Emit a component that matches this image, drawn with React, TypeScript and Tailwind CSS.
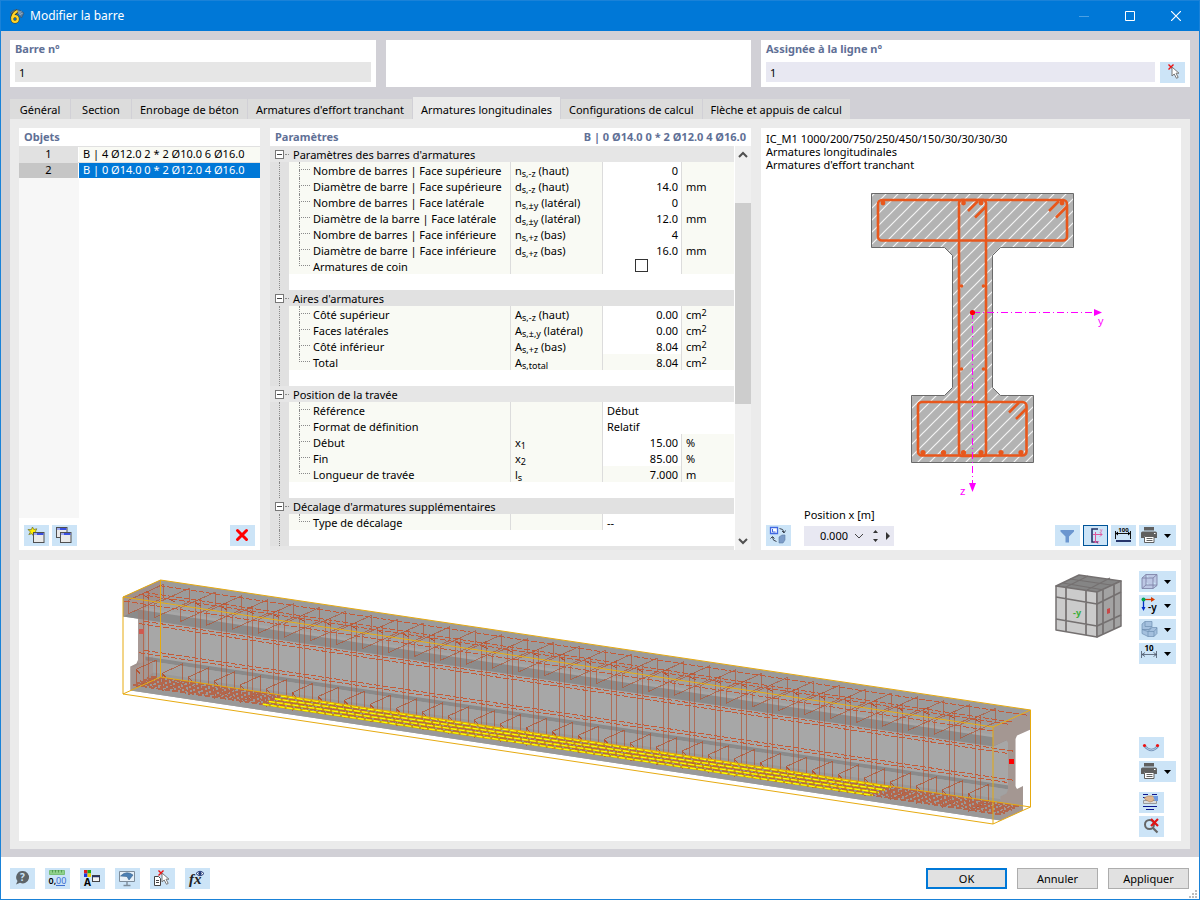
import { useState } from 'react'
import type { ReactNode } from 'react'

interface ParamRow {
  label: string
  sym?: string
  sub?: string
  side?: string
  value?: string
  unit?: string
  sup?: string
  kind?: 'text' | 'check' | 'readonly'
}

interface ParamGroup {
  title: string
  rows: ParamRow[]
}

const tabs = [
  'Général',
  'Section',
  'Enrobage de béton',
  "Armatures d'effort tranchant",
  'Armatures longitudinales',
  'Configurations de calcul',
  'Flèche et appuis de calcul',
]

const objects = ['B | 4 Ø12.0 2 * 2 Ø10.0 6 Ø16.0', 'B | 0 Ø14.0 0 * 2 Ø12.0 4 Ø16.0']

const groups: ParamGroup[] = [
  {
    title: "Paramètres des barres d'armatures",
    rows: [
      { label: 'Nombre de barres | Face supérieure', sym: 'n', sub: 's,-z', side: '(haut)', value: '0' },
      { label: 'Diamètre de barre | Face supérieure', sym: 'd', sub: 's,-z', side: '(haut)', value: '14.0', unit: 'mm' },
      { label: 'Nombre de barres | Face latérale', sym: 'n', sub: 's,±y', side: '(latéral)', value: '0' },
      { label: 'Diamètre de la barre | Face latérale', sym: 'd', sub: 's,±y', side: '(latéral)', value: '12.0', unit: 'mm' },
      { label: 'Nombre de barres | Face inférieure', sym: 'n', sub: 's,+z', side: '(bas)', value: '4' },
      { label: 'Diamètre de barre | Face inférieure', sym: 'd', sub: 's,+z', side: '(bas)', value: '16.0', unit: 'mm' },
      { label: 'Armatures de coin', kind: 'check' },
    ],
  },
  {
    title: "Aires d'armatures",
    rows: [
      { label: 'Côté supérieur', sym: 'A', sub: 's,-z', side: '(haut)', value: '0.00', unit: 'cm', sup: '2' },
      { label: 'Faces latérales', sym: 'A', sub: 's,±,y', side: '(latéral)', value: '0.00', unit: 'cm', sup: '2' },
      { label: 'Côté inférieur', sym: 'A', sub: 's,+z', side: '(bas)', value: '8.04', unit: 'cm', sup: '2' },
      { label: 'Total', sym: 'A', sub: 's,total', value: '8.04', unit: 'cm', sup: '2', kind: 'readonly' },
    ],
  },
  {
    title: 'Position de la travée',
    rows: [
      { label: 'Référence', value: 'Début', kind: 'text' },
      { label: 'Format de définition', value: 'Relatif', kind: 'text' },
      { label: 'Début', sym: 'x', sub: '1', value: '15.00', unit: '%' },
      { label: 'Fin', sym: 'x', sub: '2', value: '85.00', unit: '%' },
      { label: 'Longueur de travée', sym: 'l', sub: 's', value: '7.000', unit: 'm', kind: 'readonly' },
    ],
  },
  {
    title: "Décalage d'armatures supplémentaires",
    rows: [{ label: 'Type de décalage', value: '--', kind: 'text' }],
  },
]

function IconButton({ label, menu, active, children }: { label: string; menu?: boolean; active?: boolean; children: ReactNode }) {
  return (
    <button
      type="button"
      aria-label={label}
      className={`flex h-[21px] shrink-0 items-center bg-[#cce4f7] hover:bg-[#b3d7f2] ${menu ? 'w-[37px]' : 'w-[25px]'} ${active ? 'outline outline-1 -outline-offset-1 outline-[#005499]' : ''}`}
    >
      <svg viewBox="0 0 25 21" className="h-[21px] w-[25px] shrink-0">{children}</svg>
      {menu && (
        <svg viewBox="0 0 7 4" className="h-1 w-[7px]"><path d="M0 0h7L3.500 4z" /></svg>
      )}
    </button>
  )
}

function Pointer({ x, y }: { x: number; y: number }) {
  return (
    <path
      transform={`translate(${x} ${y})`}
      d="M0 0v9l2.200-2 2.300 4.300 1.700-.9-2.200-4.200h3z"
      fill="#fff"
      stroke="#777"
      strokeWidth="1"
    />
  )
}

function MiniWindow({ x, y }: { x: number; y: number }) {
  return (
    <g transform={`translate(${x} ${y})`}>
      <rect x=".5" y=".5" width="10.500" height="10" fill="#e9e9e9" stroke="#505050" />
      <path d="M1 2h9.500" stroke="#3a50e0" strokeWidth="2" />
      <path d="M1 2h3" stroke="#fff" strokeWidth="1" />
    </g>
  )
}

function PrinterIcon() {
  return (
    <g>
      <path d="M5 2h10v3.500H5z" fill="#606060" />
      <path d="M3.500 6.500h13q1.500 0 1.500 1.500v5h-3v-2H5v2H2V8q0-1.500 1.500-1.500z" fill="#606060" />
      <path d="M5.500 11.500h9.500v6H5.500z" fill="#fff" stroke="#606060" />
      <path d="M7.500 13.500h6M7.500 15.500h6" stroke="#606060" />
      <path d="M15 8.500h1.500" stroke="#fff" />
    </g>
  )
}

function PickIcon() {
  return (
    <g>
      <path d="M8.500 2.500l5 5M13.500 2.500l-5 5" stroke="#e11" strokeWidth="1.400" />
      <Pointer x={12} y={5} />
    </g>
  )
}

function TitleBar() {
  return (
    <header className="flex h-[30px] items-center bg-[#0078d7] pl-2 text-white">
      <svg viewBox="0 0 16 16" className="h-4 w-4">
        <path d="M1 5Q7-2 15 5L12.500 10 9 6 4 6z" fill="#5c7c9c" stroke="#2f5070" strokeWidth=".6" />
        <path d="M4 4l4-2 5 4M6 2l6 5M9 5l4-2M10 7l4-2" stroke="#a9bfd2" strokeWidth=".5" fill="none" />
        <path d="M8.500 3Q4 5 3 10" stroke="#3d3d20" strokeWidth="3.600" fill="none" />
        <circle cx="6" cy="11" r="2.800" stroke="#3d3d20" strokeWidth="3.400" fill="none" />
        <path d="M8.500 3Q4 5 3.200 10" stroke="#ffd42a" strokeWidth="2.200" fill="none" />
        <circle cx="6" cy="11" r="2.800" stroke="#ffd42a" strokeWidth="2.200" fill="none" />
      </svg>
      <h1 className="ml-[5px] flex-1 text-[12px] leading-4">Modifier la barre</h1>
      <button type="button" aria-label="Réduire" className="flex h-full w-[46px] items-center justify-center" disabled>
        <svg viewBox="0 0 10 10" className="h-[10px] w-[10px]"><path d="M0 5.500h10" stroke="#4ba0e3" /></svg>
      </button>
      <button type="button" aria-label="Agrandir" className="flex h-full w-[46px] items-center justify-center">
        <svg viewBox="0 0 10 10" className="h-[10px] w-[10px]"><path d="M.5.5h9v9h-9z" fill="none" stroke="#fff" /></svg>
      </button>
      <button type="button" aria-label="Fermer" className="flex h-full w-[46px] items-center justify-center">
        <svg viewBox="0 0 10 10" className="h-[10px] w-[10px]"><path d="M0 0l10 10M10 0L0 10" stroke="#fff" strokeWidth="1.200" /></svg>
      </button>
    </header>
  )
}

function ObjectList() {
  const [selected, setSelected] = useState(1)
  return (
    <section className="flex flex-col bg-white">
      <h2 className="h-[18px] px-[5px] font-bold leading-[18px] text-[#5f7096]">Objets</h2>
      <div className="flex flex-1 flex-col">
        {objects.map((o, i) => (
          <button key={o} type="button" onClick={() => setSelected(i)} className="flex h-4 w-full border-t border-[#e1e1e1] text-left leading-[14px]">
            <span className={`h-[15px] w-[60px] shrink-0 border-r border-white text-center ${i === selected ? 'bg-[#c6c6c6]' : 'bg-[#e1e1e1]'}`}>{i + 1}</span>
            <span className={`h-[15px] flex-1 truncate pl-1 ${i === selected ? 'bg-[#0078d7] text-white' : 'bg-[#f9faf4]'}`}>{o}</span>
          </button>
        ))}
        <div className="w-[60px] flex-1 bg-[#f7f7f7]" />
      </div>
      <div className="mt-[7px] mb-1 flex gap-[3px] px-[5px]">
        <IconButton label="Nouveau">
          <path d="M8.500 2l1.300 2.500 3-.7-1.300 2.500 1.700 2-2.700.2-1 2.500-1.500-2.300-3.200.8L6.500 7 4 4.500l3.300.2z" fill="#ffee00" stroke="#77772a" strokeWidth=".8" />
          <MiniWindow x={9} y={7} />
        </IconButton>
        <IconButton label="Copier">
          <MiniWindow x={4} y={2} />
          <MiniWindow x={8} y={7} />
        </IconButton>
        <span className="flex-1" />
        <IconButton label="Supprimer">
          <path d="M7.500 5.500l9 9M16.500 5.500l-9 9" stroke="#f00" strokeWidth="3" strokeLinecap="round" />
        </IconButton>
      </div>
    </section>
  )
}

function ParamLine({ row, last }: { row: ParamRow; last: boolean }) {
  const wide = row.kind === 'text'
  const tint = row.kind === 'readonly' ? 'bg-[#f9faf4]' : 'bg-white'
  return (
    <tr className="h-4">
      <td className="bg-[#e1e1e1] p-0"><span className="ml-[9px] block h-4 border-l border-dotted border-[#8a8a8a]" /></td>
      <td className="bg-[#f9faf4] p-0">
        <span className="flex h-4">
          <span className="ml-[10px] w-[11px]">
            <span className="block h-2 border-b border-l border-dotted border-[#8a8a8a]" />
            {!last && <span className="block h-2 border-l border-dotted border-[#8a8a8a]" />}
          </span>
          <span className="ml-[3px] whitespace-nowrap">{row.label}</span>
        </span>
      </td>
      <td className="border-l border-[#dcdcdc] bg-[#f9faf4] p-0">
        <span className="block h-4 pl-1 whitespace-nowrap">
          {row.sym}
          <span className="relative top-[2px] text-[9px] leading-none">{row.sub}</span> {row.side}
        </span>
      </td>
      <td colSpan={wide ? 2 : 1} className={`border-l border-[#dcdcdc] p-0 ${tint}`}>
        {row.kind === 'check' ? (
          <input type="checkbox" aria-label={row.label} className="mx-auto mb-px block h-[13px] w-[13px] appearance-none border border-[#333] bg-white checked:bg-[#0078d7]" />
        ) : (
          <span className={`block h-4 ${wide ? 'pl-1 text-left' : 'pr-[3px] text-right'}`}>{row.value}</span>
        )}
      </td>
      {!wide && (
        <td className="border-l border-[#dcdcdc] bg-[#f9faf4] p-0">
          <span className="block h-4 pl-1">
            {row.unit}
            {row.sup && <span className="relative -top-[3px] text-[9px] leading-none">{row.sup}</span>}
          </span>
        </td>
      )}
    </tr>
  )
}

function GroupRows({ group, odd }: { group: ParamGroup; odd: boolean }) {
  const [open, setOpen] = useState(true)
  const bg = odd ? 'bg-[#e1e1e1]' : 'bg-[#e6e6e6]'
  return (
    <tbody>
      <tr className={`h-4 ${bg}`}>
        <td className="p-0">
          <span className="flex h-4 items-center pl-[5px]">
            <button type="button" aria-label={group.title} onClick={() => setOpen(!open)} className="flex h-[9px] w-[9px] items-center justify-center border border-[#777] bg-white">
              <span className="h-px w-[5px] bg-[#444]" />
            </button>
            <span className="ml-px h-px w-1 border-t border-dotted border-[#8a8a8a]" />
          </span>
        </td>
        <th colSpan={4} className="p-0 text-left font-normal">
          <span className="block h-4 pl-1">{group.title}</span>
        </th>
      </tr>
      {open && group.rows.map((r, i) => <ParamLine key={r.label} row={r} last={i === group.rows.length - 1} />)}
      <tr className="h-4">
        <td className="bg-[#e1e1e1] p-0"><span className="ml-[9px] block h-4 border-l border-dotted border-[#8a8a8a]" /></td>
        <td colSpan={4} className="bg-white p-0" />
      </tr>
    </tbody>
  )
}

function Parameters() {
  return (
    <section className="bg-white">
      <h2 className="flex h-[18px] justify-between px-[5px] font-bold leading-[18px] text-[#5f7096]">
        <span>Paramètres</span>
        <span>{objects[1]}</span>
      </h2>
      <div className="flex h-[404px]">
        <div className="flex-1 overflow-hidden">
          <table className="w-full table-fixed border-separate border-spacing-0 leading-[18px]">
            <colgroup>
              <col className="w-[19px]" />
              <col />
              <col className="w-[92px]" />
              <col className="w-[79px]" />
              <col className="w-[53px]" />
            </colgroup>
            {groups.map((g, i) => <GroupRows key={g.title} group={g} odd={i % 2 === 1} />)}
            <tbody><tr className="h-4 bg-[#e6e6e6]"><td colSpan={5} /></tr></tbody>
          </table>
        </div>
        <div className="ml-px flex w-4 flex-col items-center bg-[#f0f0f0]">
          <svg viewBox="0 0 16 17" className="h-[17px] w-4"><path d="M4 11l4-4 4 4" fill="none" stroke="#505050" strokeWidth="2" /></svg>
          <div className="mt-10 h-[201px] w-full bg-[#cdcdcd]" />
          <span className="flex-1" />
          <svg viewBox="0 0 16 17" className="h-[17px] w-4"><path d="M4 6l4 4 4-4" fill="none" stroke="#505050" strokeWidth="2" /></svg>
        </div>
      </div>
    </section>
  )
}

function CrossSection() {
  const outline = 'M871.500 193.500h202v54h-73l-8 8v132l8 8h33v67H911.500v-67h33l8-8v-132l-8-8h-73z'
  return (
    <svg viewBox="761 171 420 332" className="block h-[332px] w-full">
      <defs>
        <pattern id="hatch" width="12" height="12" patternUnits="userSpaceOnUse">
          <path d="M-1 13L13-1M-1 1L1-1M11 13l2-2" stroke="#f4f4f4" strokeWidth="1.200" />
        </pattern>
      </defs>
      <path d={outline} fill="#b3b3b3" />
      <path d={outline} fill="url(#hatch)" stroke="#6a6a6a" />
      <g fill="none" stroke="#e8571c" strokeWidth="2.600">
        <rect x="878" y="200" width="189" height="40.500" rx="4" />
        <rect x="959" y="200" width="27" height="256" rx="3" />
        <rect x="918" y="402" width="108.500" height="53.500" rx="4" />
        <path d="M968 211l10-10M975 217.500l11-11M1049 211l10-10M1056 217.500l11-11M1009 412.500l10-10M1016 419l10-10" />
      </g>
      <g fill="#e8571c">
        {[883, 963.500, 981, 1062].map(x => <circle key={x} cx={x} cy="203" r="2.400" />)}
        {[923, 943.500, 963.500, 981, 1001, 1021].map(x => <circle key={x} cx={x} cy="452.500" r="2.600" />)}
        {[286, 369].map(y => [961.500, 983.500].map(x => <circle key={`${x}-${y}`} cx={x} cy={y} r="1.800" />))}
      </g>
      <g stroke="#f0f" strokeDasharray="7 3 1 3">
        <path d="M973 312.500h122M972.500 312v171" />
      </g>
      <path d="M1094 309v7l8-3.500zM969 483h7l-3.500 9z" fill="#f0f" />
      <circle cx="972.500" cy="312.500" r="2.600" fill="#f00" />
      <text x="1098" y="325" fill="#f0f" fontSize="11" fontFamily="Liberation Sans, sans-serif">y</text>
      <text x="960" y="495" fill="#f0f" fontSize="11" fontFamily="Liberation Sans, sans-serif">z</text>
    </svg>
  )
}

function SectionView() {
  return (
    <section className="flex flex-col bg-white">
      <div className="px-[5px] pt-1 leading-[13px]">
        <p>IC_M1 1000/200/750/250/450/150/30/30/30/30</p>
        <p>Armatures longitudinales</p>
        <p>Armatures d'effort tranchant</p>
      </div>
      <CrossSection />
      <div className="mt-auto mb-1 flex items-end px-[5px]">
        <IconButton label="Changer de vue">
          <path d="M4.500 2.500h7v6h-7z" fill="#fff" stroke="#4169e1" strokeWidth="1.300" />
          <path d="M6.500 4v3h3" stroke="#4169e1" fill="none" />
          <path d="M13.500 3.500q4 0 4.500 4M16 6l2 2 1.500-2.500M6.500 12q0 4 4 4.500M4.500 13.500l2-2 2 2" stroke="#3c4654" fill="none" />
          <path d="M13 12l3-2h3v5l-2 3h-4z" fill="#7c9cc8" stroke="#5f7fa8" strokeWidth=".6" />
        </IconButton>
        <label className="ml-[13px] block">
          <span className="block h-5 leading-[18px]">Position x [m]</span>
          <span className="flex h-5 w-[90px] items-center bg-[#e8e8f2]">
            <input defaultValue="0.000" className="w-11 bg-transparent text-right outline-none" />
            <svg viewBox="0 0 46 20" className="h-5 w-[46px]">
              <path d="M7 8l4 4 4-4" fill="none" stroke="#444" />
              <path d="M25 7h5l-2.500-3zM25 13h5l-2.500 3zM38 6v8l4-4z" fill="#333" />
            </svg>
          </span>
        </label>
        <div className="ml-auto flex gap-[3px]">
          <IconButton label="Filtrer">
            <path d="M5.500 5h13.500v1.500l-5 5v6h-3.500v-6l-5-5z" fill="#6b96cf" />
          </IconButton>
          <IconButton label="Axes" active>
            <path d="M15 4H9v13h6" fill="none" stroke="#223366" strokeWidth="1.600" />
            <path d="M10 9.500h9M12.500 7v11M17 7.500l2 2-2 2M10.500 16l2 2 2-2" stroke="#e0559b" fill="none" />
            <text x="17" y="7" fontSize="5" fill="#e0559b">y</text>
            <text x="14" y="19" fontSize="5" fill="#e0559b">z</text>
          </IconButton>
          <IconButton label="Dimensions">
            <text x="12.500" y="7" fontSize="6" fontWeight="700" textAnchor="middle">100</text>
            <path d="M4.500 6v8M19.500 6v8M5 8.500h14" stroke="#111" />
            <path d="M7 6.500v4L4.500 8.500zM17 6.500v4l2.500-2z" />
            <path d="M5 16h15" stroke="#26356b" strokeWidth="2" />
          </IconButton>
          <IconButton label="Imprimer" menu><PrinterIcon /></IconButton>
        </div>
      </div>
    </section>
  )
}

// axonometric projection: t along the beam in px, u across the width, v down the height
const px = (t: number, u: number) => 123 + t + 37.5 * u
const py = (t: number, u: number, v: number) => 597 + (t * 130) / 870 - 17 * u + 97 * v
const pt = (t: number, u: number, v: number) => `${px(t, u).toFixed(1)} ${py(t, u, v).toFixed(1)}`
const poly = (...p: [number, number, number][]) => `M${p.map(q => pt(...q)).join('L')}Z`
const line = (u: number, v: number, from = 0, to = 870) => `M${pt(from, u, v)}L${pt(to, u, v)}`
const strip = (u1: number, v1: number, u2: number, v2: number) =>
  poly([0, u1, v1], [870, u1, v1], [870, u2, v2], [0, u2, v2])
const profile = (t: number) =>
  poly(
    [t, 0, 0], [t, 1, 0], [t, 1, 0.2], [t, 0.64, 0.2], [t, 0.6, 0.23], [t, 0.6, 0.72], [t, 0.64, 0.75], [t, 0.8, 0.75],
    [t, 0.8, 1], [t, 0.2, 1], [t, 0.2, 0.75], [t, 0.36, 0.75], [t, 0.4, 0.72], [t, 0.4, 0.23], [t, 0.36, 0.2], [t, 0, 0.2],
  )

const stirrups = Array.from({ length: 33 }, (_, i) => 4.500 + i * 26)
const bottomBars = [0.26, 0.36, 0.455, 0.545, 0.64, 0.74]
const addedBars = [0.26, 0.42, 0.58, 0.74]

function NavCube() {
  return (
    <g stroke="#747070" strokeWidth="1.500" strokeLinejoin="round">
      <path d="M1056 586l23-11 42 6-24 12z" fill="#858585" />
      <path d="M1063 583l41 7M1070 579l41 6M1066 587l22-11M1087 590l23-12" strokeWidth="1.200" fill="none" />
      <path d="M1056 586l41 6v45l-41-7z" fill="#cbcbcb" />
      <path d="M1097 592l24-11v45l-24 11z" fill="#a3a3a3" />
      <path d="M1056 597l41 7 24-12M1056 619l41 7 24-11M1066 588v44M1086 591v44M1103 590v44M1114 585v44" fill="none" strokeWidth="1.700" />
      <text x="1073" y="616" fontSize="9" fontWeight="700" fill="#3aae3a" stroke="none">-y</text>
      <path d="M1107 609l3-1v5l-3 1z" fill="#c84848" stroke="none" />
    </g>
  )
}

function BeamView() {
  return (
    <svg viewBox="19 560 1112 281" className="h-[281px] min-w-0 flex-1">
      <path d={profile(0)} fill="#9a9a9a" />
      <path d={strip(0, 0, 1, 0)} fill="#9b9b9b" />
      <path d={strip(0, 0, 0, 0.2)} fill="#a2a2a2" />
      <path d={strip(0.4, 0.17, 0.4, 0.75)} fill="#a7a7a7" />
      <path d={strip(0, 0.2, 0.4, 0.2)} fill="#8b8b8b" />
      <path d={strip(0.6, 0.72, 0.6, 0.76)} fill="#8a8a8a" />
      <path d={strip(0.6, 0.76, 0.2, 0.78)} fill="#a2a2a2" />
      <path d={strip(0.2, 0.75, 0.2, 1)} fill="#a2a2a2" />
      <path d={strip(0.8, 0.92, 0.2, 1)} fill="#999" />
      <path d={profile(870)} fill="#a39c99" />
      <path d={profile(0)} fill="#b06a55" fillOpacity=".2" />
      <path d={profile(870)} fill="#b06a55" fillOpacity=".1" />

      <g fill="none" stroke="#b4512f" strokeWidth="1" shapeRendering="crispEdges">
        {stirrups.map((t, i) => (
          <g key={t}>
            <path d={poly([t, 0.03, 0.03], [t, 0.97, 0.03], [t, 0.97, 0.17], [t, 0.03, 0.17])} strokeOpacity=".65" />
            <path d={`M${pt(t, 0.43, 0.05)}L${pt(t + 3, 0.5, 0.09)}`} />
            {i !== 1 && <path d={poly([t, 0.43, 0.03], [t, 0.57, 0.03], [t, 0.57, 0.96], [t, 0.43, 0.96])} strokeOpacity=".65" />}
            <path d={poly([t, 0.23, 0.78], [t, 0.77, 0.78], [t, 0.77, 0.96], [t, 0.23, 0.96])} strokeOpacity=".75" />
            <path d={`M${pt(t, 0.23, 0.78)}L${pt(t + 3, 0.25, 0.82)}`} />
          </g>
        ))}
        <g strokeDasharray="6 2" stroke="#c65a36">
          {[0.04, 0.44, 0.56, 0.96].map(u => <path key={u} d={line(u, 0.05)} />)}
          {[0.35, 0.65].map(v => [0.43, 0.57].map(u => <path key={`${u}-${v}`} d={line(u, v)} />))}
        </g>
        <g strokeDasharray="6 2" strokeWidth="2" stroke="#b4664b">
          {bottomBars.map(u => <path key={u} d={line(u, 0.95)} />)}
        </g>
      </g>
      {addedBars.map(u => (
        <g key={u} fill="none">
          <path d={line(u, 0.95, 130, 740)} stroke="#c9a000" strokeWidth="2" />
          <path d={line(u, 0.95, 130, 740)} stroke="#ffff00" strokeWidth="1.300" strokeDasharray="6 2" />
        </g>
      ))}

      <g fill="none" stroke="#e6aa10" strokeWidth="1">
        <path d={strip(0, 0, 1, 0)} />
        <path d={strip(0, 1, 1, 1)} />
        <path d={[0, 870].map(t => [0, 1].map(u => `M${pt(t, u, 0)}L${pt(t, u, 1)}`).join('')).join('')} />
      </g>
      <path d="M139 629h5v5h-5z" fill="#d05a50" />
      <path d="M1009 759h5v5h-5z" fill="#f00" />
      <NavCube />
    </svg>
  )
}

function ModelView() {
  return (
    <section className="flex flex-1 bg-white">
      <BeamView />
      <div className="mr-[5px] ml-2 flex w-[37px] flex-col gap-[3px] pt-[11px] pb-1">
        <IconButton label="Affichage" menu>
          <path d="M3 7l4-3.500h11v11L14 17.500H3zM3 7h11v10.500M14 7l4-3.500M7 3.500v10.500h11M7 14l-4 3.500" fill="#a9a5cc" fillOpacity=".45" stroke="#8084a8" strokeWidth=".9" />
        </IconButton>
        <IconButton label="Vue -y" menu>
          <path d="M5 4.500h9" stroke="#d63c00" strokeWidth="1.300" />
          <path d="M12 2l4 2.500L12 7z" fill="#d63c00" />
          <path d="M4.500 6v8" stroke="#0030c8" strokeWidth="1.300" />
          <path d="M2.500 12h4l-2 4z" fill="#0030c8" />
          <circle cx="4.500" cy="4.500" r="2" fill="#00a550" />
          <text x="9" y="16" fontSize="10" fontWeight="600">-y</text>
        </IconButton>
        <IconButton label="Rendu" menu>
          <path d="M3 5l3-2.500h7v5l-3 3h-7z" fill="#a4c0de" stroke="#6f8fb2" strokeWidth=".7" />
          <path d="M3 10.500h7l3-2h5v6l-3 3H9l-6-3z" fill="#a4c0de" stroke="#6f8fb2" strokeWidth=".7" />
          <path d="M6 2.500v5h7M9 17.500v-5h6v5M15 12.500l3-3.500M9 12.500l-6-2M9 12.500l3-3" fill="none" stroke="#6f8fb2" strokeWidth=".7" />
        </IconButton>
        <IconButton label="Cotes" menu>
          <text x="10" y="8" fontSize="8" fontWeight="700" textAnchor="middle">10</text>
          <path d="M2.500 8v7M17.500 8v7M3 11.500h15M6 9.500l-3 2 3 2M14.500 9.500l3 2-3 2" fill="none" stroke="#4a5568" strokeWidth=".8" />
        </IconButton>
        <span className="flex-1" />
        <IconButton label="Déformée">
          <path d="M5.500 9q7 8 13.500 0" fill="none" stroke="#7593b8" strokeWidth="2.400" />
          <path d="M5.500 9q7 8 13.500 0" fill="none" stroke="#c3d8ee" strokeWidth=".8" />
          <circle cx="5.500" cy="8.500" r="1.600" fill="#e11" />
          <circle cx="18.500" cy="8.500" r="1.600" fill="#e11" />
        </IconButton>
        <IconButton label="Imprimer le modèle" menu><PrinterIcon /></IconButton>
        <span className="h-1" />
        <IconButton label="Liste">
          <path d="M4 2.500h5M13 2.500h5M4 5.500h5M4 14.500h14M7 17.500h8" stroke="#0c1890" strokeWidth="1.200" />
          <path d="M4.500 8.500h13v3h-13z" fill="#ddd" stroke="#888" strokeWidth=".8" />
          <path d="M5 6l4-2h5l2 2-2 3-3 1-4-2z" fill="#dfb792" stroke="#a98058" strokeWidth=".6" />
          <path d="M14 4h5v5h-3z" fill="#6f9ae0" />
        </IconButton>
        <IconButton label="Annuler la sélection">
          <circle cx="10.500" cy="8.500" r="4.500" fill="none" stroke="#666" strokeWidth="2" />
          <path d="M14 12l4.500 4.500" stroke="#666" strokeWidth="2.200" />
          <path d="M12 3l7 7M19 3l-7 7" stroke="#e01515" strokeWidth="2.200" />
        </IconButton>
      </div>
    </section>
  )
}

function Footer() {
  const action = 'h-[21px] w-[81px] bg-[#e1e1e1] text-center'
  return (
    <footer className="flex h-[42px] items-center bg-white pl-[9px] pr-[10px]">
      <div className="flex flex-1 gap-[10px]">
        <IconButton label="Aide">
          <path d="M12.500 3a6.200 6.200 0 1 1-2.500 11.700L6 16.500 7.500 13A6.200 6.200 0 0 1 12.500 3z" fill="#5d6468" />
          <text x="12.500" y="13" fontSize="10" fontWeight="700" fill="#cce4f7" textAnchor="middle">?</text>
        </IconButton>
        <IconButton label="Unités">
          <path d="M4.500 2.500h15v4h-15z" fill="#8fd18a" stroke="#78c078" />
          <path d="M7.500 2v2.500M10.500 2v2.500M13.500 2v2.500M16.500 2v2.500" stroke="#3f8a3f" strokeWidth=".7" />
          <text x="3.500" y="16" fontSize="9" fontWeight="600">0,</text>
          <text x="11" y="16" fontSize="9" fill="#3d6fd1">00</text>
          <path d="M11 17.500h9" stroke="#3d6fd1" />
        </IconButton>
        <IconButton label="Affichage des propriétés">
          <path d="M4 2h3.500v3.500H4z" fill="#e02020" />
          <path d="M7.500 2H11v3.500H7.500z" fill="#19a519" />
          <path d="M4 5.500h3.500V9H4z" fill="#2038d8" />
          <path d="M7.500 5.500H11V9H7.500z" fill="#f2d000" />
          <text x="4" y="18" fontSize="10" fontWeight="700">A</text>
          <rect x="12.500" y="7.500" width="7" height="6" fill="#f4f4f4" stroke="#444" />
          <path d="M12 8.500h8" stroke="#26356b" strokeWidth="1.500" />
        </IconButton>
        <IconButton label="Vue écran">
          <path d="M4.500 3.500h15v10h-15z" fill="#e6f0f8" stroke="#7d8c9a" />
          <path d="M5.500 8q6-6 12.500-1l-4 5-2-3.500z" fill="#4c80b4" stroke="#355f8a" strokeWidth=".6" />
          <path d="M12 14v3M8.500 17.500h7" stroke="#7d8c9a" strokeWidth="1.400" />
        </IconButton>
        <IconButton label="Sélection">
          <path d="M4.500 8.500h4l2 2v7h-6z" fill="#fff" stroke="#444" />
          <path d="M6 12.500h3M6 14.500h3" stroke="#444" />
          <path d="M8.500 2.500l5 5M13.500 2.500l-5 5" stroke="#e11" strokeWidth="1.400" />
          <Pointer x={12} y={5} />
        </IconButton>
        <IconButton label="Formule">
          <text x="4" y="16" fontSize="15" fontStyle="italic" fontWeight="700" fontFamily="Liberation Serif, serif" fill="#222">fx</text>
          <path d="M11 5.500q4-4.500 8 0-4 4.500-8 0z" fill="#fff" stroke="#223a77" />
          <circle cx="15" cy="5.500" r="1.700" fill="#223a77" />
        </IconButton>
      </div>
      <div className="flex gap-[10px]">
        <button type="button" className={`${action} border-2 border-[#0078d7] leading-[17px]`}>OK</button>
        <button type="button" className={`${action} border border-[#adadad] leading-[19px]`}>Annuler</button>
        <button type="button" className={`${action} border border-[#adadad] leading-[19px]`}>Appliquer</button>
      </div>
      <svg viewBox="0 0 9 9" className="-mr-[9px] h-[9px] w-[9px] self-end">
        <path d="M6 0h2v2H6zM3 3h2v2H3zM6 3h2v2H6zM0 6h2v2H0zM3 6h2v2H3zM6 6h2v2H6z" fill="#bdbdbd" />
      </svg>
    </footer>
  )
}

export default function App() {
  const [tab, setTab] = useState(4)
  return (
    <div className="flex min-h-screen flex-col border border-[#1a82d8] bg-[#d1d0d6] font-['Noto_Sans',sans-serif] text-[11px] text-black">
      <TitleBar />
      <main className="flex flex-1 flex-col px-[9px] pt-[9px] pb-2">
        <div className="grid grid-cols-[366fr_365fr_429fr] gap-[10px]">
          <div className="h-[47px] bg-white px-[5px]">
            <label htmlFor="bar-no" className="block h-[22px] font-bold leading-[18px] text-[#5f7096]">Barre n°</label>
            <input id="bar-no" readOnly defaultValue="1" className="block h-5 w-full bg-[#e6e6e6] px-1 outline-none" />
          </div>
          <div className="h-[47px] bg-white" />
          <div className="h-[47px] bg-white px-[5px]">
            <label htmlFor="line-no" className="block h-[22px] font-bold leading-[18px] text-[#5f7096]">Assignée à la ligne n°</label>
            <div className="flex gap-[5px]">
              <input id="line-no" defaultValue="1" className="block h-5 min-w-0 flex-1 bg-[#e8e8f2] px-1 outline-none" />
              <IconButton label="Sélectionner"><PickIcon /></IconButton>
            </div>
          </div>
        </div>

        <div role="tablist" className="mt-[10px] flex h-[22px] items-end">
          {tabs.map((t, i) => (
            <button
              key={t}
              type="button"
              role="tab"
              aria-selected={tab === i}
              onClick={() => setTab(i)}
              className={`min-w-[61px] border-r border-[#d1d0d6] px-2 leading-[22px] ${tab === i ? 'h-[22px] bg-[#ebebeb] pt-[2px]' : 'h-5 bg-[#dcdcdc]'}`}
            >
              {t}
            </button>
          ))}
        </div>

        <div className="flex flex-1 flex-col gap-[10px] bg-[#ebebeb] px-[9px] pt-[9px] pb-2">
          <div className="grid grid-cols-[241fr_481fr_420fr] gap-[10px]">
            <ObjectList />
            <Parameters />
            <SectionView />
          </div>
          <ModelView />
        </div>
      </main>
      <Footer />
    </div>
  )
}
